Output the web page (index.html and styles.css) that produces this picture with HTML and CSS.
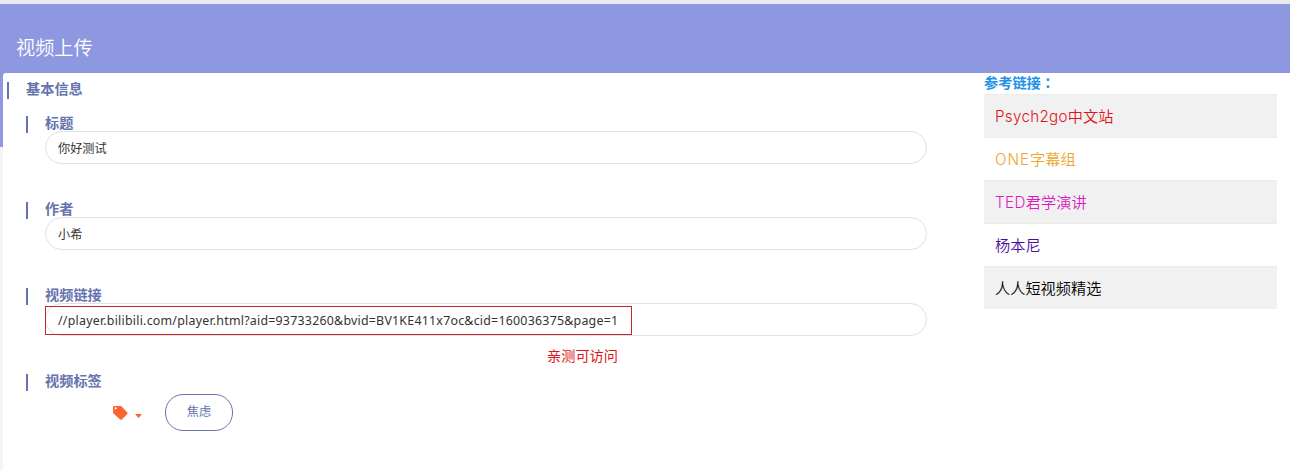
FILE: index.html
```html
<!DOCTYPE html>
<html lang="zh-CN">
<head>
<meta charset="utf-8">
<title>视频上传</title>
<link rel="stylesheet" href="styles.css">
</head>
<body>
<header class="header"><h1 class="title">视频上传</h1></header>
<div class="backdrop">
  <main class="panel">
    <section class="form">
      <h2 class="label">基本信息</h2>
      <div class="fields">
        <div class="field"><h3 class="label">标题</h3><div class="input">你好测试</div></div>
        <div class="field"><h3 class="label">作者</h3><div class="input">小希</div></div>
        <div class="field">
          <h3 class="label">视频链接</h3>
          <div class="input"><span class="url">//player.bilibili.com/player.html?aid=93733260&amp;bvid=BV1KE411x7oc&amp;cid=160036375&amp;page=1</span></div>
          <div class="outline"></div>
          <div class="note">亲测可访问</div>
        </div>
        <div class="field">
          <h3 class="label">视频标签</h3>
          <div class="tags">
            <svg class="tag-icon" width="15" height="15" viewBox="0 0 15 15"><path fill="#fa6432" fill-rule="evenodd" d="M1 0H7.5Q8.2 0 8.7.5L14.3 6.4Q15 7.2 14.3 7.9L8.8 13.6Q8 14.3 7.2 13.6L.6 7.4Q0 6.9 0 6.1V1Q0 0 1 0ZM2.7 1.2A1.1 1.1 0 1 0 2.7 3.4A1.1 1.1 0 1 0 2.7 1.2Z"/></svg>
            <svg class="caret" width="7" height="4" viewBox="0 0 7 4"><path fill="#fa6432" d="M0 0H7L3.5 4Z"/></svg>
            <span class="pill">焦虑</span>
          </div>
        </div>
      </div>
    </section>
    <aside class="links">
      <h2 class="links-title">参考链接<span class="colon" lang="zh-TW">：</span></h2>
      <ul class="list">
        <li class="item red"><span class="latin psych">Psych2go</span>中文站</li>
        <li class="item orange"><span class="latin one">ONE</span>字幕组</li>
        <li class="item pink"><span class="latin ted">TED</span>君学演讲</li>
        <li class="item violet">杨本尼</li>
        <li class="item">人人短视频精选</li>
      </ul>
    </aside>
  </main>
</div>
</body>
</html>
```
FILE: styles.css
```css
* { box-sizing: border-box; }
body {
  margin: 0;
  height: 471px;
  overflow: hidden;
  background: #fff;
  font-family: "Noto Sans", "Noto Sans CJK SC", sans-serif;
}
h1, h2, h3, ul { margin: 0; padding: 0; }
.header {
  height: 73px;
  border-top: 4px solid #e9ebee;
  background: #8d98e0;
  padding: 30px 16px 0;
}
.title { font-size: 19.2px; line-height: 28px; font-weight: 350; color: #fff; }
.backdrop {
  height: 398px;
  padding-left: 3px;
  background: linear-gradient(#8d98e0 74px, #f4f5fb 74px);
}
.panel {
  display: flex;
  height: 398px;
  background: #fff;
  border-top-left-radius: 3px;
}
.form { width: 924px; padding: 9px 0 0 4px; }
.label {
  height: 17px;
  border-left: 2px solid #6673ae;
  padding-left: 17px;
  font-size: 14.2px;
  line-height: 14px;
  font-weight: 700;
  color: #6673ae;
}
.fields { padding: 17px 0 0 19px; }
.field { position: relative; height: 86px; }
.input {
  margin: -2px 0 0 19px;
  height: 33px;
  border: 1px solid #e0e0e0;
  border-radius: 17px;
  padding-left: 12px;
  font-size: 12.2px;
  line-height: 34px;
  color: #333;
  white-space: nowrap;
}
.url { font-size: 12.4px; letter-spacing: .23px; }
.outline {
  position: absolute;
  left: 19px;
  top: 18px;
  width: 587px;
  height: 29px;
  border: 1px solid #c1272d;
}
.note {
  position: absolute;
  left: 521px;
  top: 58px;
  font-size: 14.2px;
  line-height: 20px;
  color: #dc1420;
}
.tags { display: flex; padding: 4px 0 0 87px; }
.tag-icon { margin-top: 11px; }
.caret { margin: 19px 0 0 7px; }
.pill {
  margin: -1px 0 0 23px;
  width: 68px;
  height: 37px;
  border: 1px solid #6673ae;
  border-radius: 18px;
  font-size: 12.2px;
  line-height: 34px;
  text-align: center;
  color: #6673ae;
}
.links { width: 293px; margin-left: 57px; }
.links-title {
  height: 21px;
  font-size: 14.2px;
  line-height: 20px;
  font-weight: 700;
  color: #2492e8;
}
.colon { font-family: "Noto Sans CJK TC", sans-serif; line-height: 1; }
.list { list-style: none; }
.item {
  height: 43px;
  padding-left: 11px;
  border-top: 1px solid #ebebeb;
  font-size: 15.2px;
  line-height: 43px;
  font-weight: 350;
  color: #000;
}
.item:nth-child(odd) { background: #f1f1f1; }
.latin { font-family: Inter, sans-serif; font-weight: 300; }
.psych { letter-spacing: .3px; }
.one { letter-spacing: 1px; }
.ted { letter-spacing: .4px; }
.red { color: #dc1420; }
.orange { color: #eda52b; }
.pink { color: #dc1cc0; }
.violet { color: #4c0ca0; }
```
